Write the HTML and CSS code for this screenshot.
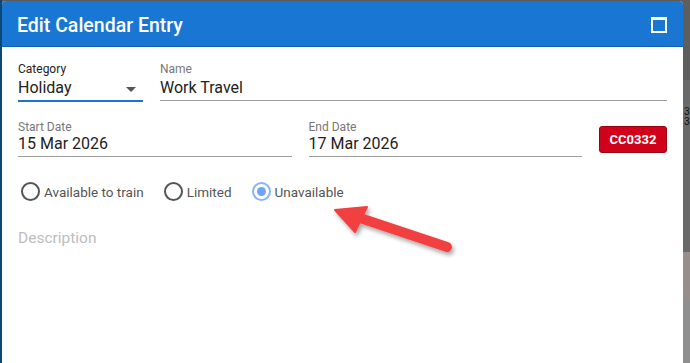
FILE: index.html
```html
<!DOCTYPE html>
<html>
<head>
<meta charset="utf-8">
<link rel="stylesheet" href="styles.css">
</head>
<body>
<div class="screen">
  <div class="edge-left"></div>
  <div class="dialog">
    <div class="header">
      <div class="title">Edit Calendar Entry</div>
      <div class="max-icon"></div>
    </div>
    <div class="body">
      <div class="row row1">
        <div class="field cat">
          <div class="label dark">Category</div>
          <div class="value">Holiday<span class="caret"></span></div>
          <div class="line active"></div>
        </div>
        <div class="field name">
          <div class="label">Name</div>
          <div class="value">Work Travel</div>
          <div class="line"></div>
        </div>
      </div>
      <div class="row row2">
        <div class="field date">
          <div class="label">Start Date</div>
          <div class="value">15 Mar 2026</div>
          <div class="line"></div>
        </div>
        <div class="field date">
          <div class="label">End Date</div>
          <div class="value">17 Mar 2026</div>
          <div class="line"></div>
        </div>
        <div class="badge">CC0332</div>
      </div>
      <div class="radios">
        <label class="radio"><span class="circle"></span>Available to train</label>
        <label class="radio"><span class="circle"></span>Limited</label>
        <label class="radio on"><span class="circle"><span class="dot"></span></span>Unavailable</label>
      </div>
      <div class="desc">Description</div>
      <svg class="arrow" width="140" height="70" viewBox="0 0 140 70">
        <defs>
          <filter id="sh" x="-20%" y="-20%" width="150%" height="160%">
            <feDropShadow dx="2" dy="3" stdDeviation="2" flood-color="#000" flood-opacity="0.35"/>
          </filter>
        </defs>
        <g filter="url(#sh)">
          <line x1="127" y1="51" x2="40" y2="22" stroke="#f24141" stroke-width="10" stroke-linecap="round"/>
          <polygon points="15,14 47,11 35,36" fill="#f24141" stroke="#f24141" stroke-width="2" stroke-linejoin="round"/>
        </g>
      </svg>
    </div>
  </div>
  <div class="edge-right"><span class="nums">3<br>3</span></div>
</div>
</body>
</html>
```
FILE: styles.css
```css
* { box-sizing: border-box; }
html, body { margin: 0; padding: 0; }
body {
  width: 690px;
  height: 363px;
  overflow: hidden;
  background: #5b5b5b;
  font-family: Roboto, "Noto Sans", sans-serif;
}
.screen {
  display: flex;
  height: 363px;
}
.edge-left {
  width: 2px;
  background: #0c4877;
  flex: none;
}
.edge-right {
  width: 7px;
  flex: none;
  background: linear-gradient(to bottom, #5e5e5e 0, #5e5e5e 80px, #6a6a6a 80px, #6a6a6a 252px, #978e8b 252px, #978e8b 299px, #8f8f8f 299px);
  position: relative;
}
.nums {
  position: absolute;
  left: 1px;
  top: 107px;
  font-size: 10px;
  line-height: 10px;
  color: #111;
  font-family: "Liberation Sans", sans-serif;
}
.dialog {
  width: 681px;
  margin-top: 1px;
  background: #fff;
  border-radius: 4px 4px 0 0;
  overflow: hidden;
  display: flex;
  flex-direction: column;
}
.header {
  height: 46px;
  background: #1976d2;
  border-bottom: 1px solid #1160b4;
  display: flex;
  align-items: center;
  justify-content: space-between;
  padding: 3px 16px 0 15px;
}
.title {
  color: #fff;
  font-size: 19.5px;
  font-weight: 500;
}
.max-icon {
  width: 16px;
  height: 16px;
  border: 2px solid #fff;
  border-top-width: 3px;
}
.body {
  position: relative;
  flex: 1;
  padding: 15px 16px 0 16px;
}
.row {
  display: flex;
  align-items: flex-start;
}
.field { display: flex; flex-direction: column; }
.label {
  font-size: 12px;
  color: #777;
  line-height: 14px;
  height: 14px;
}
.label.dark { color: #222; }
.value {
  font-size: 16px;
  color: #222;
  line-height: 20px;
  margin-top: 2px;
  height: 22px;
  position: relative;
}
.row2 .value { margin-top: 0; }
.line {
  height: 1px;
  background: #9e9e9e;
}
.line.active {
  height: 2px;
  background: #1976d2;
}
.cat { width: 125px; }
.caret {
  position: absolute;
  right: 7px;
  top: 9px;
  width: 0; height: 0;
  border-left: 5px solid transparent;
  border-right: 5px solid transparent;
  border-top: 5px solid #555;
}
.name { flex: 1; margin-left: 17px; }
.row2 { margin-top: 18px; }
.date { width: 274px; margin-right: 17px; }
.badge {
  margin-top: 6px;
  width: 68px;
  height: 27px;
  background: #d0021b;
  border: 1px solid #9a0010;
  border-radius: 3px;
  color: #fff;
  font-weight: 700;
  font-size: 13px;
  display: flex;
  align-items: center;
  justify-content: center;
}
.radios {
  display: flex;
  margin-top: 25px;
  padding-left: 3px;
}
.radio {
  display: flex;
  align-items: center;
  font-size: 13.5px;
  color: #555;
  margin-right: 20px;
}
.circle {
  width: 19px;
  height: 19px;
  border: 2px solid #555;
  border-radius: 50%;
  margin-right: 4px;
  display: flex;
  align-items: center;
  justify-content: center;
}
.radio.on .circle { border-color: #8ab4f8; }
.dot {
  width: 9px;
  height: 9px;
  border-radius: 50%;
  background: #6ea3f5;
}
.desc {
  margin-top: 28px;
  font-size: 15.5px;
  color: #bdbdbd;
}
.arrow {
  position: absolute;
  left: 318px;
  top: 149px;
}
```
